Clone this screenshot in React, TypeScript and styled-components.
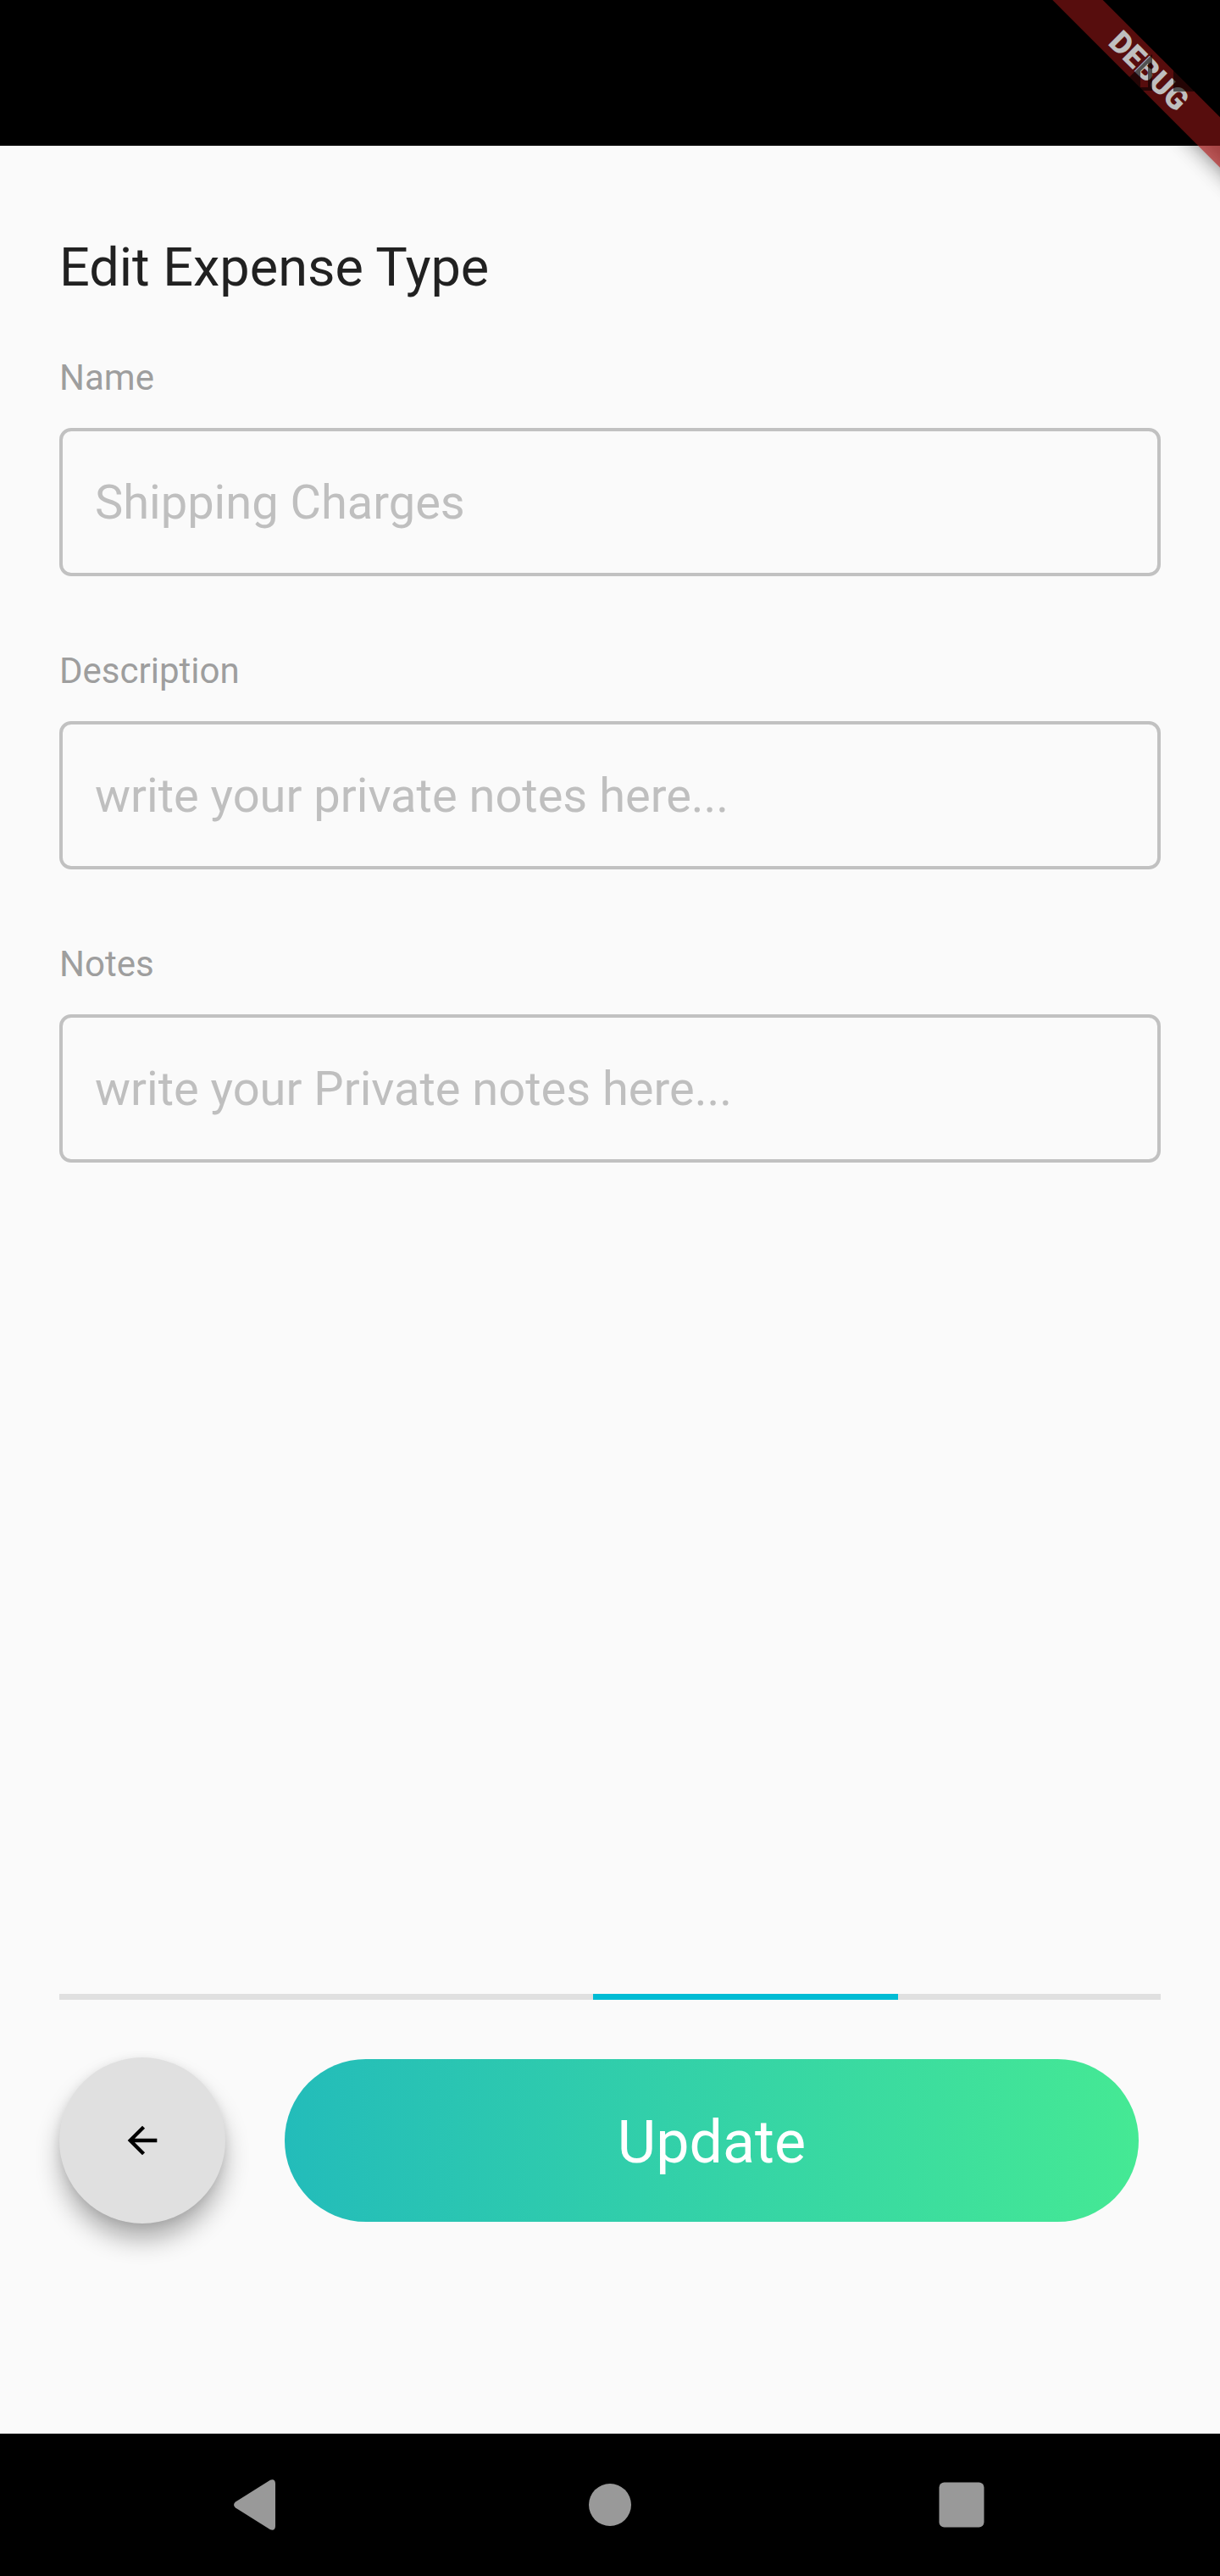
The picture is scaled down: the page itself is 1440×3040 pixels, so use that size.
import React from "react";
import styled, { createGlobalStyle } from "styled-components";

const GlobalStyle = createGlobalStyle`
  *, *::before, *::after { box-sizing: border-box; }
  body { margin: 0; background: #fafafa; }
  button, input { font: inherit; }
`;

const Screen = styled.div`
  position: relative;
  display: flex;
  flex-direction: column;
  min-height: 100vh;
  overflow: hidden;
  background: #fafafa;
  color: #212121;
  font-family: Roboto, "Liberation Sans", sans-serif;
`;

const StatusBar = styled.header`
  flex: none;
  height: 172px;
  background: #000;
`;

const RibbonCorner = styled.div`
  position: absolute;
  top: 0;
  right: 0;
  width: 280px;
  height: 280px;
  overflow: hidden;
  pointer-events: none;
`;

const Ribbon = styled.div`
  position: absolute;
  top: 63px;
  right: -116px;
  width: 400px;
  height: 42px;
  transform: rotate(45deg);

  &::before {
    content: "";
    position: absolute;
    inset: 0;
    background: rgba(0, 0, 0, 0.5);
    filter: blur(13px);
  }
`;

const RibbonLabel = styled.span`
  position: relative;
  display: block;
  background: rgba(183, 28, 28, 0.63);
  color: #fff;
  font-size: 36px;
  font-weight: 900;
  line-height: 42px;
  text-align: center;
`;

const StatusScrim = styled.div`
  position: absolute;
  top: 0;
  left: 0;
  right: 0;
  height: 172px;
  background: rgba(0, 0, 0, 0.25);
  pointer-events: none;
`;

const StatusIcons = styled.svg`
  position: absolute;
  top: 60px;
  right: 24px;
`;

const Form = styled.form`
  flex: 1;
  display: flex;
  flex-direction: column;
  padding: 107px 70px 248px;
`;

const Title = styled.h1`
  margin: 0 0 68px;
  font-size: 63px;
  font-weight: 400;
  line-height: 74px;
`;

const Fields = styled.div`
  display: flex;
  flex-direction: column;
  gap: 87px;
`;

const Field = styled.div`
  display: flex;
  flex-direction: column;
  gap: 34px;
`;

const Label = styled.label`
  color: #9e9e9e;
  font-size: 42px;
  line-height: 50px;
`;

const TextInput = styled.input`
  width: 100%;
  height: 175px;
  padding: 0 38px;
  border: 4px solid #c1c1c1;
  border-radius: 14px;
  outline: none;
  background: transparent;
  color: #212121;
  font-size: 56px;

  &::placeholder {
    color: #bfbfbf;
    opacity: 1;
  }
`;

const Track = styled.div`
  height: 7px;
  margin: auto 0 68px;
  background: #e0e0e0;
`;

const TrackBar = styled.div`
  height: 100%;
  background: #00bcd4;
`;

const Actions = styled.div`
  display: flex;
  align-items: center;
  gap: 70px;
  padding-right: 26px;
`;

const BackButton = styled.button`
  flex: none;
  display: grid;
  place-items: center;
  width: 196px;
  height: 196px;
  padding: 0;
  border: 0;
  border-radius: 50%;
  background: #e0e0e0;
  color: #000;
  box-shadow: 0 20px 30px -2px rgba(0, 0, 0, 0.32), 0 2px 12px rgba(0, 0, 0, 0.08);
`;

const UpdateButton = styled.button`
  flex: 1;
  height: 192px;
  padding: 4px 0 0;
  border: 0;
  border-radius: 96px;
  background: linear-gradient(89deg, #23bcba, #45e994);
  color: #fff;
  font-size: 70px;
  line-height: 82px;
`;

const NavBar = styled.nav`
  flex: none;
  display: flex;
  height: 168px;
  padding: 0 6.8%;
  background: #000;
`;

const NavButton = styled.button`
  flex: 1;
  display: grid;
  place-items: center;
  padding: 0;
  border: 0;
  background: transparent;
  color: #999;
`;

const fields = [
  { id: "name", label: "Name", placeholder: "Shipping Charges" },
  { id: "description", label: "Description", placeholder: "write your private notes here..." },
  { id: "notes", label: "Notes", placeholder: "write your Private notes here..." },
];

const progress = { start: 630 / 1300, length: 360 / 1300 };

export default function App() {
  return (
    <Screen>
      <GlobalStyle />
      <StatusBar />

      <Form onSubmit={(event) => event.preventDefault()}>
        <Title>Edit Expense Type</Title>
        <Fields>
          {fields.map((field) => (
            <Field key={field.id}>
              <Label htmlFor={field.id}>{field.label}</Label>
              <TextInput id={field.id} type="text" placeholder={field.placeholder} />
            </Field>
          ))}
        </Fields>

        <Track role="progressbar" aria-label="Progress">
          <TrackBar
            style={{
              marginLeft: `${progress.start * 100}%`,
              width: `${progress.length * 100}%`,
            }}
          />
        </Track>

        <Actions>
          <BackButton type="button" aria-label="Back">
            <svg width="52" height="52" viewBox="0 0 24 24" fill="currentColor" aria-hidden="true">
              <path d="M20 11H7.83l5.59-5.59L12 4l-8 8 8 8 1.41-1.41L7.83 13H20v-2z" />
            </svg>
          </BackButton>
          <UpdateButton type="submit">Update</UpdateButton>
        </Actions>
      </Form>

      <NavBar>
        <NavButton type="button" aria-label="System back">
          <svg width="60" height="60" viewBox="0 0 60 60" fill="currentColor" aria-hidden="true">
            <path d="M3 26.500 L44 0.700 Q50 -1 50 5 V55 Q50 61 44 59.300 L3 33.500 Q-1 30 3 26.500Z" />
          </svg>
        </NavButton>
        <NavButton type="button" aria-label="Home">
          <svg width="60" height="60" viewBox="0 0 60 60" fill="currentColor" aria-hidden="true">
            <circle cx="30" cy="30" r="25" />
          </svg>
        </NavButton>
        <NavButton type="button" aria-label="Recent apps">
          <svg width="60" height="60" viewBox="0 0 60 60" fill="currentColor" aria-hidden="true">
            <rect x="3.500" y="3.500" width="53" height="53" rx="6" />
          </svg>
        </NavButton>
      </NavBar>

      <RibbonCorner>
        <Ribbon>
          <RibbonLabel>DEBUG</RibbonLabel>
        </Ribbon>
      </RibbonCorner>
      <StatusScrim>
        <StatusIcons width="100" height="50" viewBox="0 0 100 50" fill="#000" fillOpacity="0.58" aria-hidden="true">
          <path fillRule="evenodd" d="M44 4V47H1L44 4ZM39 15L30 24V43H39V15Z" />
          <path d="M69 8H75V4H87V8H93V48H69Z" />
        </StatusIcons>
      </StatusScrim>
    </Screen>
  );
}
